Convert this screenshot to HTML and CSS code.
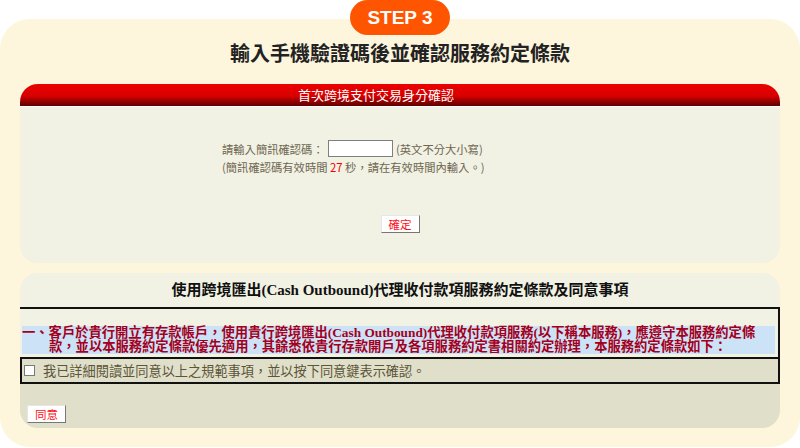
FILE: index.html
```html
<!DOCTYPE html>
<html lang="zh-Hant">
<head>
    <meta charset="UTF-8">
    <meta name="viewport" content="width=device-width, initial-scale=1.0">
    <title>輸入手機驗證碼後並確認服務約定條款</title>
    <link rel="stylesheet" href="styles.css">
</head>
<body>
    <div class="card">
        <div class="step-badge">STEP 3</div>
        <h2 class="card-title">輸入手機驗證碼後並確認服務約定條款</h2>

        <section class="panel verify-panel">
            <div class="panel-head">首次跨境支付交易身分確認</div>
            <div class="panel-body">
                <div class="sms-block">
                    <div class="sms-row">
                        <label for="smsCode">請輸入簡訊確認碼：</label>
                        <input type="text" id="smsCode" class="sms-input">
                        <span>(英文不分大小寫)</span>
                    </div>
                    <div class="sms-note">(簡訊確認碼有效時間 <span class="count">27</span> 秒，請在有效時間內輸入。)</div>
                </div>
                <div class="btn-row">
                    <button class="plain-btn">確定</button>
                </div>
            </div>
        </section>

        <section class="panel terms-panel">
            <h3 class="terms-title">使用跨境匯出(Cash Outbound)代理收付款項服務約定條款及同意事項</h3>
            <div class="terms-box">
                <p class="terms-text">一、客戶於貴行開立有存款帳戶，使用貴行跨境匯出(Cash Outbound)代理收付款項服務(以下稱本服務)，應遵守本服務約定條款，並以本服務約定條款優先適用，其餘悉依貴行存款開戶及各項服務約定書相關約定辦理，本服務約定條款如下：</p>
            </div>
            <label class="agree-row">
                <input type="checkbox" class="agree-check">
                <span>我已詳細閱讀並同意以上之規範事項，並以按下同意鍵表示確認。</span>
            </label>
            <div class="agree-foot">
                <button class="plain-btn">同意</button>
            </div>
        </section>
    </div>
</body>
</html>
```

FILE: styles.css
```css
body {
    margin: 0;
    background: #ffffff;
    font-family: "Noto Sans CJK TC", sans-serif;
}
.card {
    position: relative;
    margin-top: 19px;
    height: 428px;
    box-sizing: border-box;
    padding: 22px 20px 0;
    background: #fdf5dc;
    border-radius: 30px;
}
.step-badge {
    position: absolute;
    top: -19px;
    left: 350px;
    width: 100px;
    height: 35px;
    line-height: 35px;
    border-radius: 18px;
    background: #ff5500;
    color: #ffffff;
    text-align: center;
    font-family: "Liberation Sans", Arial, sans-serif;
    font-weight: bold;
    font-size: 19px;
}
.card-title {
    margin: 0 0 19px;
    height: 24px;
    line-height: 24px;
    text-align: center;
    font-size: 20px;
    font-weight: bold;
    color: #222222;
}
.panel {
    background: #f1f1e4;
    border-radius: 18px;
}
.panel-head {
    height: 22px;
    line-height: 22px;
    padding-right: 48px;
    border-radius: 18px 18px 0 0;
    border-bottom: 1px solid #ffffff;
    background: linear-gradient(#ec0000, #d80000 55%, #8c0000 82%, #5e0000);
    color: #ffffff;
    text-align: center;
    font-size: 13px;
}
.panel-body {
    height: 156px;
    box-sizing: border-box;
    padding-top: 33px;
    font-size: 11.3px;
    color: #6e6650;
}
.sms-block {
    padding-left: 202px;
}
.sms-row {
    display: flex;
    align-items: center;
    height: 17px;
}
.sms-row label {
    width: 106px;
}
.sms-input {
    width: 65px;
    height: 17px;
    box-sizing: border-box;
    margin: 0 3px 0 0;
    border: 1px solid #7f7f7f;
    background: #ffffff;
    padding: 0;
}
.sms-note {
    margin-top: 2px;
    line-height: 16px;
}
.count {
    color: #f00000;
}
.btn-row {
    margin-top: 40px;
    display: flex;
    justify-content: center;
}
.plain-btn {
    display: block;
    width: 39px;
    height: 18px;
    padding: 0;
    background: #ffffff;
    border: 1px solid;
    border-color: #e6e6e6 #777777 #777777 #e6e6e6;
    color: #ff1020;
    font-family: "Noto Sans CJK TC", sans-serif;
    font-size: 11.5px;
    line-height: 15px;
}
.terms-panel {
    margin-top: 10px;
    height: 155px;
    overflow: hidden;
}
.terms-title {
    margin: 0;
    height: 34px;
    line-height: 34px;
    text-align: center;
    font-family: "Liberation Serif", "Noto Sans CJK TC", serif;
    font-size: 15px;
    font-weight: bold;
    color: #111111;
}
.terms-box {
    border-top: 2px solid #111111;
    border-right: 2px solid #111111;
    padding: 17px 3px 0 2px;
    height: 31px;
    background: #f1f1e4;
}
.terms-text {
    margin: 0;
    padding-left: 27px;
    text-indent: -27px;
    background: #cce2f7;
    font-family: "Liberation Serif", "Noto Sans CJK TC", serif;
    font-size: 13.3px;
    line-height: 14px;
    font-weight: bold;
    color: #a3001c;
}
.agree-row {
    display: flex;
    align-items: center;
    gap: 8px;
    height: 27px;
    box-sizing: border-box;
    border: 2px solid #111111;
    padding-left: 2px;
    background: #e0dfca;
    font-family: "Liberation Serif", "Noto Sans CJK TC", serif;
    font-size: 13.2px;
    color: #5c5538;
}
.agree-check {
    appearance: none;
    margin: 0;
    width: 11px;
    height: 11px;
    border: 1px solid #7a7a7a;
    background: #ffffff;
}
.agree-foot {
    height: 44px;
    box-sizing: border-box;
    padding: 21px 0 0 7px;
    background: #e0dfca;
}
```
